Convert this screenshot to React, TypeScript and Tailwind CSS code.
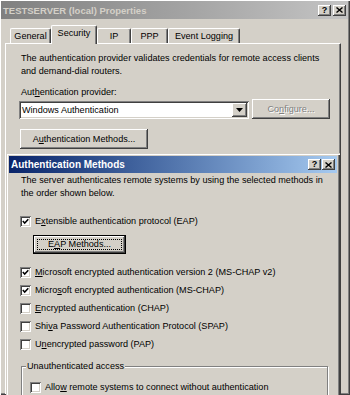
import React from "react";

const raised =
  "shadow-[inset_-1px_-1px_0_#404040,inset_1px_1px_0_#ffffff,inset_-2px_-2px_0_#808080,inset_2px_2px_0_#d4d0c8]";
const sunken =
  "shadow-[inset_1px_1px_0_#808080,inset_-1px_-1px_0_#ffffff,inset_2px_2px_0_#404040,inset_-2px_-2px_0_#d4d0c8]";

function CapBtn({ kind }: { kind: "help" | "close" }) {
  return (
    <span
      className={`w-[13px] h-[11px] bg-[#d4d0c8] flex items-center justify-center ${raised}`}
    >
      {kind === "help" ? (
        <span className="font-bold text-[9px] leading-[9px] text-black">?</span>
      ) : (
        <svg width="7" height="6" viewBox="0 0 7 6">
          <path d="M0.5 0.5 L6.5 5.5 M6.5 0.5 L0.5 5.5" stroke="#000" strokeWidth="1.4" fill="none" />
        </svg>
      )}
    </span>
  );
}

function Check({ checked }: { checked?: boolean }) {
  return (
    <span className={`w-[11px] h-[11px] bg-white shrink-0 flex items-center justify-center ${sunken}`}>
      {checked && (
        <svg width="7" height="7" viewBox="0 0 7 7">
          <path d="M0.8 3.1 L2.7 5.1 L6.3 1.3" stroke="#000" strokeWidth="1.5" fill="none" />
        </svg>
      )}
    </span>
  );
}

function Row({ checked, children }: { checked?: boolean; children: React.ReactNode }) {
  return (
    <div className="h-[18px] flex items-center gap-[4px]">
      <Check checked={checked} />
      <span className="whitespace-nowrap">{children}</span>
    </div>
  );
}

function Tab({ label, selected, w }: { label: string; selected?: boolean; w: string }) {
  if (selected) {
    return (
      <div
        className={`${w} h-[19px] mb-[-1px] relative z-10 bg-[#d4d0c8] border-t border-l border-white border-r border-r-[#404040] rounded-t-[2px] shadow-[inset_-1px_0_0_#808080] pt-[1px] text-center whitespace-nowrap`}
      >
        {label}
      </div>
    );
  }
  return (
    <div
      className={`${w} h-[15px] bg-[#d4d0c8] border-t border-l border-white border-r border-r-[#404040] rounded-t-[2px] shadow-[inset_-1px_0_0_#808080] text-center whitespace-nowrap leading-[14px]`}
    >
      {label}
    </div>
  );
}

export default function App() {
  return (
    <div className="relative w-[350px] h-[395px] overflow-hidden bg-[#d4d0c8] font-['Liberation_Sans',Arial,sans-serif] text-[9.1px] leading-[13px] text-black">
      {/* Outer properties window */}
      <div className="h-full flex flex-col p-[1px] pr-[2px] shadow-[inset_1px_1px_0_#ffffff,inset_-1px_-1px_0_#404040,inset_-2px_-2px_0_#808080]">
        <div className="h-[18px] shrink-0 flex items-center pl-[2px] pr-[2px] bg-gradient-to-r from-[#808080] to-[#c4c4c4]">
          <span className="flex-1 font-bold text-[9.5px] text-[#d4d0c8] whitespace-nowrap">
            TESTSERVER (local) Properties
          </span>
          <div className="flex gap-[2px]">
            <CapBtn kind="help" />
            <CapBtn kind="close" />
          </div>
        </div>

        <div className="mt-[6px] ml-[9px] h-[18px] shrink-0 flex items-end">
          <Tab label="General" w="w-[41px]" />
          <Tab label="Security" w="w-[46px]" selected />
          <Tab label="IP" w="w-[34px]" />
          <Tab label="PPP" w="w-[37px]" />
          <Tab label="Event Logging" w="w-[72px]" />
        </div>

        <div className="ml-[4px] w-[336px] flex-1 border-t border-l border-white border-r border-r-[#404040] shadow-[inset_-1px_0_0_#808080]">
          <div className="pt-[8px] pl-[14px]">
            <p className="pl-[1px] whitespace-nowrap">
              The authentication provider validates credentials for remote access clients
              <br />
              and demand-dial routers.
            </p>
            <div className="mt-[8px] pl-[1px]">
              Aut<u className="underline-offset-1">h</u>entication provider:
            </div>
            <div className="flex items-end">
              <div className={`ml-[-1px] w-[230px] h-[18px] bg-white flex items-center pl-[3px] pr-[2px] ${sunken}`}>
                <span className="flex-1 whitespace-nowrap">Windows Authentication</span>
                <span className={`w-[15px] h-[14px] bg-[#d4d0c8] flex items-center justify-center ${raised}`}>
                  <svg width="7" height="4" viewBox="0 0 7 4">
                    <path d="M0 0 H7 L3.5 4 Z" fill="#000" />
                  </svg>
                </span>
              </div>
              <div
                className={`ml-[3px] w-[78px] h-[20px] bg-[#d4d0c8] flex items-center justify-center text-[#808080] [text-shadow:1px_1px_0_#ffffff] ${raised}`}
              >
                Co<u className="underline-offset-1">n</u>figure...
              </div>
            </div>
            <div className={`mt-[10px] w-[128px] h-[20px] bg-[#d4d0c8] flex items-center justify-center ${raised}`}>
              A<u className="underline-offset-1">u</u>thentication Methods...
            </div>
          </div>
        </div>
      </div>

      {/* Authentication Methods dialog (overlapping window) */}
      <div className="absolute left-[6px] top-[153px] w-[334px] h-[260px] bg-[#d4d0c8] p-[3px] shadow-[inset_1px_1px_0_#d4d0c8,inset_2px_2px_0_#ffffff,inset_-1px_-1px_0_#404040,inset_-2px_-2px_0_#808080]">
        <div className="h-[17px] flex items-center pl-[2px] pr-[2px] bg-gradient-to-r from-[#0a246a] to-[#a6caf0]">
          <span className="flex-1 font-bold text-[10px] text-white whitespace-nowrap">Authentication Methods</span>
          <div className="flex gap-[1px]">
            <CapBtn kind="help" />
            <CapBtn kind="close" />
          </div>
        </div>

        <div className="pt-[1px] pl-[11px]">
          <p className="pl-[1px] whitespace-nowrap">
            The server authenticates remote systems by using the selected methods in
            <br />
            the order shown below.
          </p>

          <div className="mt-[12px]">
            <Row checked>
              E<u className="underline-offset-1">x</u>tensible authentication protocol (EAP)
            </Row>
          </div>

          <div className="mt-[5px] ml-[13px] w-[93px] h-[19px] border border-black bg-[#d4d0c8]">
            <div className={`w-full h-full flex items-center justify-center p-[3px] ${raised}`}>
              <div className="w-full h-full flex items-center justify-center border border-dotted border-black">
                E<u className="underline-offset-1">A</u>P Methods...
              </div>
            </div>
          </div>

          <div className="mt-[9px]">
            <Row checked>
              <u className="underline-offset-1">M</u>icrosoft encrypted authentication version 2 (MS-CHAP v2)
            </Row>
            <Row checked>
              Micro<u className="underline-offset-1">s</u>oft encrypted authentication (MS-CHAP)
            </Row>
            <Row>
              <u className="underline-offset-1">E</u>ncrypted authentication (CHAP)
            </Row>
            <Row>
              Shi<u className="underline-offset-1">v</u>a Password Authentication Protocol (SPAP)
            </Row>
            <Row>
              U<u className="underline-offset-1">n</u>encrypted password (PAP)
            </Row>
          </div>

          <div className="relative mt-[13px] ml-[1px] w-[307px] h-[60px] border border-[#808080] shadow-[inset_1px_1px_0_#ffffff,1px_1px_0_#ffffff] pt-[11px] pl-[8px]">
            <span className="absolute left-[4px] top-[-7px] bg-[#d4d0c8] px-[1px] whitespace-nowrap">
              Unauthenticated access
            </span>
            <Row>
              Allo<u className="underline-offset-1">w</u> remote systems to connect without authentication
            </Row>
          </div>
        </div>
      </div>
    </div>
  );
}
